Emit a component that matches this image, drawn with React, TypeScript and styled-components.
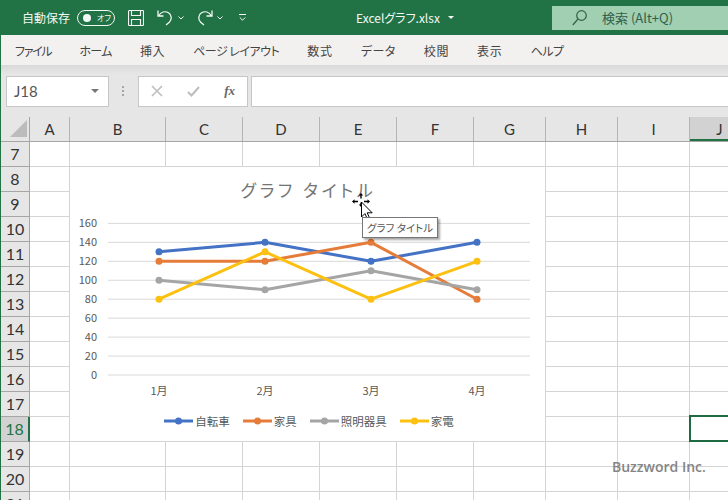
import React from 'react';
import styled, { createGlobalStyle } from 'styled-components';

const CJK = `"Noto Sans CJK JP", "Noto Sans", sans-serif`;
const HEADER_FONT = `Lato, "Open Sans", sans-serif`;
const GREEN = '#217346';
const GRID_LINE = '#d4d4d4';

const COLUMNS = [
  { name: 'A', width: 40 },
  { name: 'B', width: 96 },
  { name: 'C', width: 77 },
  { name: 'D', width: 77 },
  { name: 'E', width: 77 },
  { name: 'F', width: 77 },
  { name: 'G', width: 72 },
  { name: 'H', width: 72 },
  { name: 'I', width: 72 },
  { name: 'J', width: 60 },
];
const ROWS = [7, 8, 9, 10, 11, 12, 13, 14, 15, 16, 17, 18, 19, 20, 21];
const TABS = [
  { label: 'ファイル', tracking: -1.3 },
  { label: 'ホーム', tracking: -0.6 },
  { label: '挿入', tracking: 0.6 },
  { label: 'ページ レイアウト', tracking: -0.5 },
  { label: '数式', tracking: 0.8 },
  { label: 'データ', tracking: 0.5 },
  { label: '校閲', tracking: 0.6 },
  { label: '表示', tracking: 0.8 },
  { label: 'ヘルプ', tracking: -0.6 },
];

const MONTHS = ['1月', '2月', '3月', '4月'];
const MONTH_X = [159, 265, 371, 477];
const TICKS = [0, 20, 40, 60, 80, 100, 120, 140, 160];
const SERIES = [
  { name: '自転車', color: '#4472c4', values: [130, 140, 120, 140] },
  { name: '家具', color: '#e57c3a', values: [120, 120, 140, 80] },
  { name: '照明器具', color: '#a5a5a5', values: [100, 90, 110, 90] },
  { name: '家電', color: '#fcc010', values: [80, 130, 80, 120] },
];

const valueY = (value: number) => 375 - (value / 160) * 151.6;

const GlobalStyle = createGlobalStyle`
  html, body {
    margin: 0;
    height: 100%;
    overflow: hidden;
    background: #fff;
  }
`;

const Window = styled.div`
  border-left: 1px solid ${GREEN};
  font-family: ${CJK};
  font-feature-settings: "palt";
  height: 500px;
  overflow: hidden;
  position: relative;
  width: 727px;
`;

const TitleBar = styled.header`
  align-items: center;
  background: ${GREEN};
  color: #f4f8f5;
  display: flex;
  font-size: 12px;
  height: 35px;
  margin-left: -1px;
  padding-left: 22px;
`;

const AutoSaveLabel = styled.span`
  width: 55px;
`;

const Toggle = styled.div`
  align-items: center;
  border: 1.5px solid #f4f8f5;
  border-radius: 9px;
  box-sizing: border-box;
  display: flex;
  font-size: 8px;
  gap: 6px;
  height: 16px;
  padding-left: 5px;
  white-space: nowrap;
  width: 38px;
`;

const ToggleDot = styled.span`
  background: #f4f8f5;
  border-radius: 50%;
  flex: none;
  height: 8px;
  width: 8px;
`;

const QuickIcon = styled.svg<{ $gap: number }>`
  flex: none;
  fill: none;
  margin-left: ${(p) => p.$gap}px;
  stroke: #f4f8f5;
`;

const FileName = styled.div`
  align-items: center;
  display: flex;
  gap: 8px;
  margin-left: 110px;
  width: 196px;
`;

const SmallCaret = styled.span`
  border-left: 3px solid transparent;
  border-right: 3px solid transparent;
  border-top: 3px solid #f4f8f5;
`;

const SearchBox = styled.div`
  align-items: center;
  background: #a0cfb1;
  color: #33604a;
  display: flex;
  flex: 1;
  font-size: 13px;
  gap: 15px;
  height: 24px;
  padding-left: 20px;
`;

const TabBar = styled.nav`
  align-items: center;
  background: #f3f1f0;
  color: #444;
  display: flex;
  font-size: 12px;
  gap: 28px;
  height: 30px;
  padding-left: 14px;
`;

const Tab = styled.span<{ $tracking: number }>`
  letter-spacing: ${(p) => p.$tracking}px;
`;

const FormulaArea = styled.div`
  align-items: center;
  background: linear-gradient(#d9d9d9, #e6e6e6 9px);
  display: flex;
  height: 52px;
  padding: 0 0 0 5px;
`;

const NameBox = styled.div`
  align-items: center;
  background: #fff;
  border: 1px solid #c6c6c6;
  box-sizing: border-box;
  color: #555;
  display: flex;
  font-family: ${HEADER_FONT};
  font-size: 15px;
  height: 31px;
  justify-content: space-between;
  padding: 0 9px 0 7px;
  width: 103px;
`;

const DownCaret = styled.span`
  border-left: 4px solid transparent;
  border-right: 4px solid transparent;
  border-top: 4px solid #777;
`;

const Grip = styled.div`
  display: flex;
  flex-direction: column;
  gap: 2px;
  margin: 0 14px 0 13px;
`;

const GripDot = styled.span`
  background: #a6a6a6;
  height: 2px;
  width: 2px;
`;

const FormulaButtons = styled.div`
  align-items: center;
  background: #fff;
  border: 1px solid #c6c6c6;
  box-sizing: border-box;
  display: flex;
  height: 31px;
  justify-content: space-between;
  padding: 0 12px 0 12px;
  width: 110px;
`;

const FunctionMark = styled.span`
  color: #666;
  font-family: "Liberation Serif", serif;
  font-size: 13px;
  font-style: italic;
  font-weight: 700;
`;

const FormulaInput = styled.div`
  background: #fff;
  border: 1px solid #c6c6c6;
  border-right: 0;
  box-sizing: border-box;
  flex: 1;
  height: 31px;
  margin-left: 3px;
`;

const HeaderRow = styled.div`
  background: #e6e6e6;
  border-bottom: 1px solid #a6a6a6;
  box-sizing: border-box;
  display: flex;
  height: 25px;
`;

const Corner = styled.div`
  border-right: 1px solid #a6a6a6;
  box-sizing: border-box;
  display: flex;
  flex: none;
  width: 29px;
`;

const ColumnHeader = styled.div<{ $width: number; $active?: boolean }>`
  align-items: center;
  background: ${(p) => (p.$active ? '#d2d2d2' : 'transparent')};
  border-right: 1px solid #b4b4b4;
  box-shadow: ${(p) => (p.$active ? `inset 0 -2px 0 ${GREEN}` : 'none')};
  box-sizing: border-box;
  color: #333;
  display: flex;
  flex: none;
  font-family: ${HEADER_FONT};
  font-size: 15px;
  justify-content: center;
  width: ${(p) => p.$width}px;
`;

const SheetRow = styled.div`
  display: flex;
  height: 25px;
`;

const RowHeader = styled.div<{ $active?: boolean }>`
  align-items: center;
  background: ${(p) => (p.$active ? '#d2d2d2' : '#e6e6e6')};
  border-bottom: 1px solid #a6a6a6;
  border-right: ${(p) => (p.$active ? `2px solid ${GREEN}` : '1px solid #a6a6a6')};
  box-sizing: border-box;
  color: ${(p) => (p.$active ? GREEN : '#333')};
  display: flex;
  flex: none;
  font-family: ${HEADER_FONT};
  font-size: 16px;
  justify-content: center;
  padding-bottom: 2px;
  width: 29px;
`;

const Cell = styled.div<{ $width: number }>`
  border-bottom: 1px solid ${GRID_LINE};
  border-right: 1px solid ${GRID_LINE};
  box-sizing: border-box;
  flex: none;
  width: ${(p) => p.$width}px;
`;

const SelectedCell = styled.div`
  border: 2px solid #1e6b41;
  box-sizing: border-box;
  height: 27px;
  left: 688px;
  position: absolute;
  top: 415px;
  width: 60px;
`;

const Chart = styled.section`
  background: #fff;
  display: flex;
  flex-direction: column;
  height: 274px;
  left: 69px;
  position: absolute;
  top: 167px;
  width: 475px;
`;

const ChartTitle = styled.h2`
  color: #757575;
  font-size: 17px;
  font-weight: 400;
  letter-spacing: 3.6px;
  line-height: 24px;
  margin: 11px 0 3px 2px;
  text-align: center;
`;

const PlotSvg = styled.svg`
  display: block;
  flex: none;
`;

const AxisLabel = styled.text`
  fill: #595959;
  font-family: ${CJK};
  font-size: 11px;
`;

const Legend = styled.div`
  align-items: center;
  color: #595959;
  display: flex;
  font-size: 11.5px;
  font-feature-settings: normal;
  gap: 13px;
  justify-content: center;
  margin: 8px 0 0 3px;
`;

const LegendItem = styled.div`
  align-items: center;
  display: flex;
  gap: 2px;
`;

const Tooltip = styled.div`
  background: #fff;
  border: 1px solid #767676;
  box-shadow: 2px 2px 2px rgba(0, 0, 0, 0.35);
  box-sizing: border-box;
  color: #555;
  font-size: 10.5px;
  height: 21px;
  left: 361px;
  line-height: 19px;
  position: absolute;
  text-align: center;
  top: 217px;
  white-space: nowrap;
  width: 76px;
`;

const MoveCursor = styled.svg`
  left: 350px;
  position: absolute;
  top: 192px;
`;

const Watermark = styled.div`
  color: #858585;
  font-family: "Open Sans", sans-serif;
  font-size: 14px;
  font-weight: 600;
  left: 611px;
  position: absolute;
  top: 457px;
`;

const App: React.FC = () => {
  return (
    <Window>
      <GlobalStyle />
      <TitleBar>
        <AutoSaveLabel>自動保存</AutoSaveLabel>
        <Toggle>
          <ToggleDot />
          オフ
        </Toggle>
        <QuickIcon $gap={13} width="16" height="16" viewBox="0 0 16 16" strokeWidth="1.1">
          <path d="M.5 1.500a1 1 0 0 1 1-1h13a1 1 0 0 1 1 1v13a1 1 0 0 1-1 1h-13a1 1 0 0 1-1-1zM3.500.5v5h9v-5M3.500 15.500v-6h9v6" />
        </QuickIcon>
        <QuickIcon $gap={13} width="16" height="17" viewBox="0 0 16 17" strokeWidth="1.3">
          <path d="M1 1.500v5.500h5.500M1.500 7C4 3 8 1.800 11.500 3.800c3.500 2 3.500 7 .8 9.500L9 16" />
        </QuickIcon>
        <QuickIcon $gap={5} width="6" height="4" viewBox="0 0 6 4" strokeWidth="1">
          <path d="M.5.5 3 3 5.500.5" />
        </QuickIcon>
        <QuickIcon $gap={13} width="16" height="17" viewBox="0 0 16 17" strokeWidth="1.3">
          <path d="M15 1.500v5.500H9.500M14.500 7C12 3 8 1.800 4.500 3.800c-3.500 2-3.500 7-.8 9.500L7 16" />
        </QuickIcon>
        <QuickIcon $gap={4} width="6" height="4" viewBox="0 0 6 4" strokeWidth="1">
          <path d="M.5.5 3 3 5.500.5" />
        </QuickIcon>
        <QuickIcon $gap={16} width="7" height="7" viewBox="0 0 7 7" strokeWidth="1">
          <path d="M0 .5h7M.8 3.500 3.500 6.200 6.200 3.500" />
        </QuickIcon>
        <FileName>
          Excelグラフ.xlsx
          <SmallCaret />
        </FileName>
        <SearchBox>
          <svg width="15" height="16" viewBox="0 0 15 16" fill="none" stroke="#33604a" strokeWidth="1.2">
            <circle cx="9.500" cy="5.500" r="4.800" />
            <path d="M6 9 .8 15" />
          </svg>
          検索 (Alt+Q)
        </SearchBox>
      </TitleBar>
      <TabBar>
        {TABS.map((tab) => (
          <Tab key={tab.label} $tracking={tab.tracking}>
            {tab.label}
          </Tab>
        ))}
      </TabBar>
      <FormulaArea>
        <NameBox>
          J18
          <DownCaret />
        </NameBox>
        <Grip>
          <GripDot />
          <GripDot />
          <GripDot />
        </Grip>
        <FormulaButtons>
          <svg width="12" height="12" viewBox="0 0 12 12" stroke="#bdbdbd" strokeWidth="1.600">
            <path d="M1 1l10 10M11 1 1 11" />
          </svg>
          <svg width="13" height="11" viewBox="0 0 13 11" fill="none" stroke="#bdbdbd" strokeWidth="2">
            <path d="M1 6l3.500 3.500L12 1" />
          </svg>
          <FunctionMark>fx</FunctionMark>
        </FormulaButtons>
        <FormulaInput />
      </FormulaArea>
      <HeaderRow>
        <Corner>
          <svg width="28" height="24" viewBox="0 0 28 24">
            <path d="M9 20 26 3v17z" fill="#bcbcbc" />
          </svg>
        </Corner>
        {COLUMNS.map((col) => (
          <ColumnHeader key={col.name} $width={col.width} $active={col.name === 'J'}>
            {col.name}
          </ColumnHeader>
        ))}
      </HeaderRow>
      {ROWS.map((row) => (
        <SheetRow key={row}>
          <RowHeader $active={row === 18}>{row}</RowHeader>
          {COLUMNS.map((col) => (
            <Cell key={col.name} $width={col.width} />
          ))}
        </SheetRow>
      ))}
      <SelectedCell />
      <Chart>
        <ChartTitle>グラフ タイトル</ChartTitle>
        <PlotSvg width="475" height="200" viewBox="70 205 475 200">
          {TICKS.map((tick) => (
            <React.Fragment key={tick}>
              <line x1="108" x2="530" y1={valueY(tick)} y2={valueY(tick)} stroke="#d9d9d9" />
              <AxisLabel x="97" y={valueY(tick) + 4} textAnchor="end">
                {tick}
              </AxisLabel>
            </React.Fragment>
          ))}
          {MONTHS.map((month, i) => (
            <AxisLabel key={month} x={MONTH_X[i]} y="395" textAnchor="middle">
              {month}
            </AxisLabel>
          ))}
          {SERIES.map((s) => (
            <g key={s.name}>
              <polyline
                fill="none"
                stroke={s.color}
                strokeWidth="3"
                strokeLinejoin="round"
                points={s.values.map((v, i) => `${MONTH_X[i]},${valueY(v)}`).join(' ')}
              />
              {s.values.map((v, i) => (
                <circle key={i} cx={MONTH_X[i]} cy={valueY(v)} r="3.500" fill={s.color} />
              ))}
            </g>
          ))}
        </PlotSvg>
        <Legend>
          {SERIES.map((s) => (
            <LegendItem key={s.name}>
              <svg width="29" height="8" viewBox="0 0 29 8">
                <path d="M0 4h29" stroke={s.color} strokeWidth="3" />
                <circle cx="14.500" cy="4" r="3.500" fill={s.color} />
              </svg>
              {s.name}
            </LegendItem>
          ))}
        </Legend>
      </Chart>
      <MoveCursor width="24" height="28" viewBox="0 0 24 28">
        <path d="M10 1 7.800 3.500h1.500v3h1.400v-3h1.500zM1 9.500 3.500 7.300v1.500h3.500v1.400H3.500v1.500zM19 9.500l-2.500-2.200v1.500H13v1.400h3.500v1.500zM10 15l-2.200-2.500h1.500v-2h1.400v2h1.500z" fill="#000" />
        <path d="M10.500 10v15l3.400-3.400 2.600 5.600 2.200-1-2.500-5.400h5z" fill="#fff" stroke="#000" strokeWidth="1" />
      </MoveCursor>
      <Tooltip>グラフ タイトル</Tooltip>
      <Watermark>Buzzword Inc.</Watermark>
    </Window>
  );
};

export default App;
